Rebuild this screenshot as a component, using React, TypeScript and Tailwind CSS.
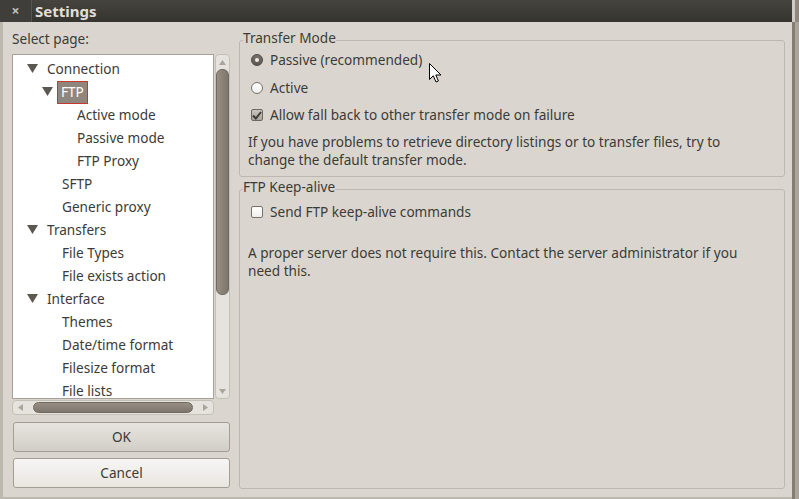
import React from 'react';

type Node = { label: string; level: number; open?: boolean; selected?: boolean };

const tree: Node[] = [
  { label: 'Connection', level: 0, open: true },
  { label: 'FTP', level: 1, open: true, selected: true },
  { label: 'Active mode', level: 2 },
  { label: 'Passive mode', level: 2 },
  { label: 'FTP Proxy', level: 2 },
  { label: 'SFTP', level: 1 },
  { label: 'Generic proxy', level: 1 },
  { label: 'Transfers', level: 0, open: true },
  { label: 'File Types', level: 1 },
  { label: 'File exists action', level: 1 },
  { label: 'Interface', level: 0, open: true },
  { label: 'Themes', level: 1 },
  { label: 'Date/time format', level: 1 },
  { label: 'Filesize format', level: 1 },
  { label: 'File lists', level: 1 },
];

const indent = ['pl-[14px]', 'pl-[29px]', 'pl-[44px]'];

function Expander() {
  return (
    <svg width="11" height="9" viewBox="0 0 11 9" className="mr-[9px] -mt-[3px] shrink-0">
      <polygon points="0,0 11,0 5.5,9" fill="#5b5852" />
    </svg>
  );
}

function TreeRow({ node }: { node: Node }) {
  return (
    <div className={`h-[23px] shrink-0 flex items-center ${indent[node.level]}`}>
      {node.open ? <Expander /> : <span className="w-[20px] shrink-0" />}
      {node.selected ? (
        <span className="-ml-[5px] h-[23px] px-[3px] flex items-center bg-[#8f877d] border border-[#c8372d] text-white">
          {node.label}
        </span>
      ) : (
        <span className="whitespace-nowrap">{node.label}</span>
      )}
    </div>
  );
}

function Arrow({ dir }: { dir: 'up' | 'down' | 'left' | 'right' }) {
  const pts = {
    up: '0,5 7,5 3.5,0',
    down: '0,0 7,0 3.5,5',
    left: '5,0 5,7 0,3.5',
    right: '0,0 0,7 5,3.5',
  }[dir];
  const horiz = dir === 'left' || dir === 'right';
  return (
    <svg width={horiz ? 5 : 7} height={horiz ? 7 : 5} className="shrink-0">
      <polygon points={pts} fill="#a9a49c" />
    </svg>
  );
}

function Radio({ checked }: { checked?: boolean }) {
  return checked ? (
    <span className="block w-[12px] h-[12px] rounded-full bg-gradient-to-b from-[#7a736a] to-[#5c564f] border border-[#4e4943] flex items-center justify-center shrink-0">
      <span className="block w-[4px] h-[4px] rounded-full bg-[#efece8]" />
    </span>
  ) : (
    <span className="block w-[12px] h-[12px] rounded-full bg-gradient-to-b from-white to-[#f1efec] border border-[#77716a] shrink-0" />
  );
}

function Check({ checked }: { checked?: boolean }) {
  return checked ? (
    <span className="block w-[12px] h-[12px] rounded-[2px] bg-gradient-to-b from-[#c9c4bd] to-[#aaa49b] border border-[#6e6861] flex items-center justify-center shrink-0">
      <svg width="10" height="9" viewBox="0 0 10 9">
        <path d="M1 4.5 L3.8 7.5 L9 1" fill="none" stroke="#3c3b37" strokeWidth="2" />
      </svg>
    </span>
  ) : (
    <span className="block w-[12px] h-[12px] rounded-[2px] bg-gradient-to-b from-white to-[#f1efec] border border-[#77716a] shrink-0" />
  );
}

function Group({ title, children, grow }: { title: string; children: React.ReactNode; grow?: boolean }) {
  return (
    <fieldset className={`border border-[#bdb8af] rounded-[3px] pl-[3px] pr-[8px] pb-[7px] ${grow ? 'flex-1' : ''}`}>
      <legend className="leading-[15px] pb-[5px] px-0">{title}</legend>
      <div className="pl-[5px]">{children}</div>
    </fieldset>
  );
}

function Button({ label, light }: { label: string; light?: boolean }) {
  return (
    <button
      className={`h-[30px] w-[217px] ml-[1px] rounded-[3px] border border-[#a39d94] text-[#3c3b37] ${
        light ? 'bg-gradient-to-b from-[#f7f6f4] to-[#e9e6e1]' : 'bg-gradient-to-b from-[#e7e4df] to-[#d2cec7]'
      }`}
    >
      {label}
    </button>
  );
}

function Cursor() {
  return (
    <svg width="13" height="21" viewBox="0 0 13 21" className="absolute left-[429px] top-[63px]">
      <path
        d="M0.5 0.5 L0.5 16.5 L4.3 12.8 L7 19 L9.4 18 L6.8 12 L12 12 Z"
        fill="white"
        stroke="black"
        strokeWidth="1"
        strokeLinejoin="round"
      />
    </svg>
  );
}

export default function App() {
  return (
    <div className="relative w-[799px] h-[499px] overflow-hidden flex bg-[#a8a29a] font-['Noto_Sans',sans-serif] text-[13.6px] text-[#3c3b37]">
      <div className="w-[792px] flex flex-col min-h-0">
        <div className="h-[22px] shrink-0 flex items-center bg-gradient-to-b from-[#45443f] to-[#35342f]">
          <div className="w-[32px] h-[22px] flex items-center justify-center bg-[#3f3e3a] border-r border-[#55544f]">
            <span className="text-[#c2beb7] text-[14px] font-bold leading-none">×</span>
          </div>
          <span className="ml-[3px] text-[#e2ded7] text-[15px] font-bold">Settings</span>
        </div>

        <div className="flex-1 min-h-0 flex bg-[#dad6cf] border-l-[3px] border-b-[2px] border-[#bcb7af] pl-[9px] pr-[7px]">
          <div className="w-[218px] min-h-0 flex flex-col pt-[9px] pb-[9px]">
            <div className="leading-[16px]">Select page:</div>
            <div className="mt-[7px] flex-1 flex min-h-0">
              <div className="w-[202px] bg-white border border-[#a7a199] overflow-hidden pt-[3px] flex flex-col">
                {tree.map((n) => (
                  <TreeRow key={n.label} node={n} />
                ))}
              </div>
              <div className="ml-[1px] w-[15px] rounded-[4px] bg-[#e6e3de] border border-[#c4bfb7] flex flex-col items-center">
                <div className="h-[14px] flex items-center">
                  <Arrow dir="up" />
                </div>
                <div className="w-[13px] h-[226px] rounded-[6px] bg-gradient-to-r from-[#978f84] via-[#8a8277] to-[#7d766c] border border-[#6f695f]" />
                <div className="flex-1" />
                <div className="h-[14px] flex items-center">
                  <Arrow dir="down" />
                </div>
              </div>
            </div>
            <div className="mt-[1px] shrink-0 w-[202px] h-[15px] rounded-[4px] bg-[#e6e3de] border border-[#c4bfb7] flex items-center px-[5px]">
              <Arrow dir="left" />
              <div className="ml-[10px] w-[160px] h-[11px] rounded-[6px] bg-gradient-to-b from-[#978f84] to-[#7d766c] border border-[#6f695f]" />
              <div className="flex-1" />
              <Arrow dir="right" />
            </div>
            <div className="mt-[7px] shrink-0">
              <Button label="OK" />
            </div>
            <div className="mt-[6px] shrink-0">
              <Button label="Cancel" light />
            </div>
          </div>

          <div className="ml-[9px] flex-1 flex flex-col pt-[8px] pb-[8px]">
            <Group title="Transfer Mode">
              <div className="h-[20px] flex items-center">
                <span className="ml-[3px]">
                  <Radio checked />
                </span>
                <span className="ml-[7px]">Passive (recommended)</span>
              </div>
              <div className="mt-[8px] h-[20px] flex items-center">
                <span className="ml-[3px]">
                  <Radio />
                </span>
                <span className="ml-[7px]">Active</span>
              </div>
              <div className="mt-[7px] h-[20px] flex items-center">
                <span className="ml-[3px]">
                  <Check checked />
                </span>
                <span className="ml-[7px]">Allow fall back to other transfer mode on failure</span>
              </div>
              <p className="mt-[8px] leading-[18px]">
                If you have problems to retrieve directory listings or to transfer files, try to
                <br />
                change the default transfer mode.
              </p>
            </Group>
            <div className="mt-[2px] flex-1 flex flex-col">
              <Group title="FTP Keep-alive" grow>
                <div className="mt-[3px] h-[20px] flex items-center">
                  <span className="ml-[3px]">
                    <Check />
                  </span>
                  <span className="ml-[7px]">Send FTP keep-alive commands</span>
                </div>
                <p className="mt-[22px] leading-[18px]">
                  A proper server does not require this. Contact the server administrator if you
                  <br />
                  need this.
                </p>
              </Group>
            </div>
          </div>
        </div>
      </div>
      <div className="flex-1 flex flex-col">
        <div className="h-[22px] bg-[#cfcac3] border-r-[4px] border-[#8e877d]" />
        <div className="flex-1 border-l-[3px] border-[#857e73] bg-[#aaa59c]" />
      </div>
      <Cursor />
    </div>
  );
}
